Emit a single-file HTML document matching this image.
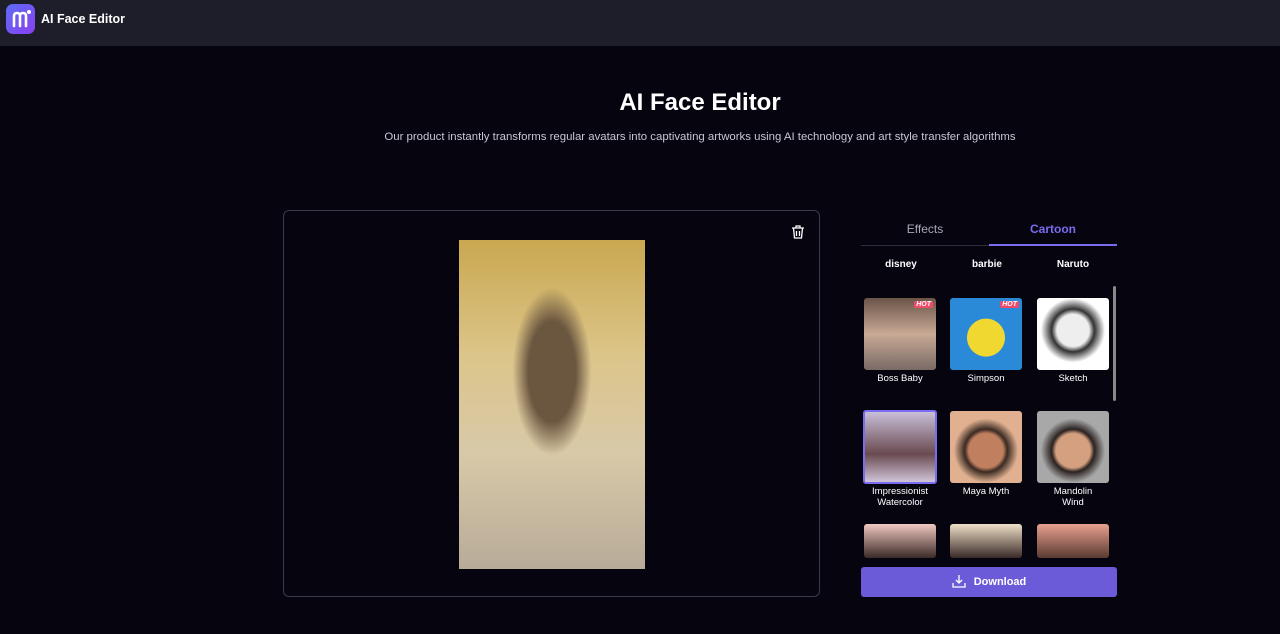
<!DOCTYPE html>
<html><head><meta charset="utf-8"><style>
*{margin:0;padding:0;box-sizing:border-box}
body{width:1280px;height:634px;background:#05040f;font-family:"Liberation Sans",sans-serif;color:#fff;position:relative;overflow:hidden}
.hdr{position:absolute;left:0;top:0;width:1280px;height:46px;background:#1e1e2a}
.logo{position:absolute;left:6px;top:4px;width:29px;height:30px;border-radius:7px;background:linear-gradient(135deg,#5b6cf5,#8a3ff0)}
.hdr .t{position:absolute;left:41px;top:12px;font-size:12.5px;font-weight:bold}
h1{position:absolute;top:89px;width:100%;left:60px;text-align:center;font-size:24px;font-weight:bold}
.sub{position:absolute;top:131px;left:60px;width:100%;text-align:center;font-size:11.4px;color:#c8c8d4}
.box{position:absolute;left:283px;top:210px;width:537px;height:387px;border:1px solid #3a3a48;border-radius:6px}
.img{position:absolute;left:459px;top:240px;width:186px;height:329px;background:radial-gradient(ellipse at 50% 40%,#6b5640 0 18%,transparent 30%),linear-gradient(180deg,#c9a850 0%,#dcc58a 35%,#d8c9a8 65%,#b8ab98 100%)}
.tabs{position:absolute;left:861px;top:218px;width:256px;height:28px;border-bottom:1px solid #2e2e3a;font-size:12px}
.tabs span{position:absolute;top:4px;width:128px;text-align:center}
.cats{position:absolute;left:861px;top:259px;width:256px;font-size:10px;font-weight:bold}
.cats span{position:absolute;width:80px;text-align:center}
.card{position:absolute;width:72px;height:72px;border-radius:3px}
.lbl{position:absolute;width:86px;text-align:center;font-size:9.5px;line-height:11px}
.hot{position:absolute;right:3px;top:3px;background:#f04a6a;font-size:7px;font-weight:bold;font-style:italic;padding:0 2px;border-radius:2px}
.btn{position:absolute;left:861px;top:567px;width:256px;height:30px;background:#6b5bd9;border-radius:3px;font-size:11px;font-weight:bold;text-align:center;line-height:30px}
</style></head><body>
<div class="hdr"><div class="logo"><svg width="29" height="30"><path d="M8 22V12q0-3 3-3t3 3v10M14 12q0-3 3-3t3 3v10" stroke="#fff" stroke-width="2.6" fill="none" stroke-linecap="round"/><circle cx="23" cy="8" r="2" fill="#fff"/></svg></div><div class="t">AI Face Editor</div></div>
<h1>AI Face Editor</h1>
<div class="sub">Our product instantly transforms regular avatars into captivating artworks using AI technology and art style transfer algorithms</div>
<div class="box"><svg style="position:absolute;left:506px;top:13px" width="16" height="16" viewBox="0 0 16 16" fill="none" stroke="#fff" stroke-width="1.3"><path d="M2 4h12M6 4V2h4v2M3.5 4l1 10h7l1-10M6.5 7v5M9.5 7v5"/></svg></div>
<div class="img"></div>
<div class="tabs"><span style="left:0;color:#a8a8b8">Effects</span><span style="left:128px;color:#7a6cf0;font-weight:bold">Cartoon</span><div style="position:absolute;left:128px;bottom:-1px;width:128px;height:2px;background:#7a6cf0"></div></div>
<div class="cats"><span style="left:0">disney</span><span style="left:86px">barbie</span><span style="left:172px">Naruto</span></div>
<div style="position:absolute;left:1113px;top:286px;width:3px;height:115px;background:#888;border-radius:2px"></div>
<div class="card" style="left:864px;top:298px;background:linear-gradient(#6a5448,#c8aa95 50%,#7a6a66)"><span class="hot">HOT</span></div>
<div class="card" style="left:950px;top:298px;background:radial-gradient(circle at 50% 55%,#f0d830 0 35%,#2a8ad8 36%)"><span class="hot">HOT</span></div>
<div class="card" style="left:1037px;top:298px;background:radial-gradient(circle at 50% 45%,#eee 0 30%,#333 40%,#fff 60%)"></div>
<div class="lbl" style="left:857px;top:373px">Boss Baby</div>
<div class="lbl" style="left:943px;top:373px">Simpson</div>
<div class="lbl" style="left:1030px;top:373px">Sketch</div>
<div class="card" style="left:863px;top:410px;width:74px;height:74px;border:2px solid #7a6cf0;background:linear-gradient(#c8bfd8,#6a4a50 60%,#d0c4d8)"></div>
<div class="card" style="left:950px;top:411px;background:radial-gradient(circle at 50% 55%,#c08060 0 32%,#3a2a22 40%,#e0b090 60%)"></div>
<div class="card" style="left:1037px;top:411px;background:radial-gradient(circle at 50% 55%,#d4a080 0 32%,#2a2220 40%,#a8a8a8 60%)"></div>
<div class="lbl" style="left:857px;top:486px">Impressionist<br>Watercolor</div>
<div class="lbl" style="left:943px;top:486px">Maya Myth</div>
<div class="lbl" style="left:1030px;top:486px">Mandolin<br>Wind</div>
<div class="card" style="left:864px;top:524px;height:34px;background:linear-gradient(#f0c8c0,#3a2a28)"></div>
<div class="card" style="left:950px;top:524px;height:34px;background:linear-gradient(#eee0c8,#3a2a28)"></div>
<div class="card" style="left:1037px;top:524px;height:34px;background:linear-gradient(#e8a090,#5a3a30)"></div>
<div class="btn"><svg style="vertical-align:-3px;margin-right:8px" width="14" height="14" viewBox="0 0 14 14" fill="none" stroke="#fff" stroke-width="1.3"><path d="M7 1v8M4 6l3 3 3-3M1 9v4h12V9"/></svg>Download</div>
</body></html>
